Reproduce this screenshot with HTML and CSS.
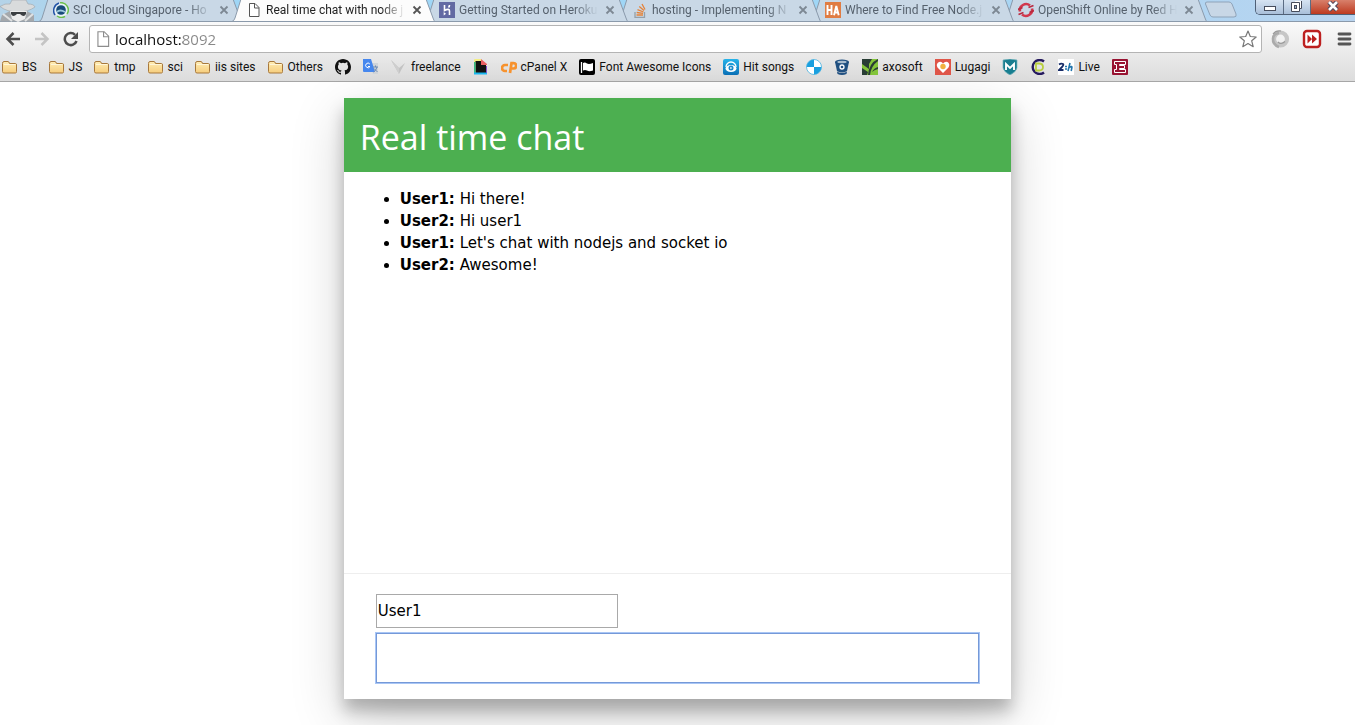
FILE: index.html
```html
<!DOCTYPE html>
<html lang="en">
<head>
<meta charset="utf-8">
<title>Real time chat with node js</title>
<link rel="stylesheet" href="styles.css">
</head>
<body>
<svg class="defs" aria-hidden="true">
  <defs>
    <linearGradient id="folder-fill" x1="0" y1="0" x2="0" y2="1"><stop offset="0" stop-color="#ffedb5"/><stop offset="1" stop-color="#f6cd7c"/></linearGradient>
    <linearGradient id="hit-fill" x1="0" y1="0" x2="0" y2="1"><stop offset="0" stop-color="#27b4ea"/><stop offset="1" stop-color="#0a6fb5"/></linearGradient>
    <symbol id="folder" viewBox="0 0 16 16"><path d="M.5 12.500V4.500Q.5 2.500 2 2.500H6Q7 2.500 7.500 4.500H13.500Q14.500 4.500 14.500 6V12.500Q14.500 14 13.500 14H2Q.5 14 .5 12.500Z" fill="url(#folder-fill)" stroke="#a8793c"/><path d="M2 5.500H13.500" stroke="#fff6d8"/></symbol>
    <symbol id="page" viewBox="0 0 16 16"><path d="M3.500 1.500H9L13 5.500V14.500H3.500Z" fill="#fff" stroke="currentColor"/><path d="M8.500 1.500V6H13" fill="none" stroke="currentColor"/></symbol>
    <symbol id="cross" viewBox="0 0 10 10"><path d="M1.500 1.500 8.500 8.500M8.500 1.500 1.500 8.500" stroke="currentColor" stroke-width="1.800"/></symbol>
    <symbol id="tab" viewBox="0 0 203 22" preserveAspectRatio="none"><path d="M0 21.500Q2 21 3 18L9-1H194L201 18Q202 21 203 21.500Z" fill="currentColor" stroke="#8b9aab"/></symbol>
  </defs>
</svg>

<header class="browser">
  <div class="tabstrip">
    <svg class="spy" viewBox="0 0 36 22" aria-hidden="true"><path d="M0 21.500 2 15 10 11H27L34 15V21.500Z" fill="#a4a8ac"/><path d="M0 6.500Q5 3 10 4L12 0H26L28 4Q34 4 35 7 28 12 18 12 7 12 0 6.500Z" fill="#d9dbdc" stroke="#9ea3a8" stroke-width=".6"/><path d="M10 11H27L25 19 18 22 12 19Z" fill="#ececec"/><path d="M11 12H26V14Q24 18 20 14H17Q13 18 11 14Z" fill="#3c3f42"/><path d="M3 14 12 21M33 14 25 21" stroke="#dfe1e2" stroke-width="2"/></svg>
    <nav class="tabs" aria-label="Tabs">
      <div class="tab tab-1">
        <svg class="tab-shape" preserveAspectRatio="none"><use href="#tab"/></svg>
        <svg class="icon" viewBox="0 0 16 16"><circle cx="8" cy="8" r="7" fill="#e9f2f6"/><path d="M2 13A8 8 0 0 1 6 1" fill="none" stroke="#2454a8" stroke-width="1.500"/><path d="M7 .8A7.200 7.200 0 0 1 14 12M12 14.300A7.200 7.200 0 0 1 4 14" fill="none" stroke="#6cc04c" stroke-width="1.500"/><circle cx="8" cy="8" r="4.800" fill="#174a7a"/><path d="M4 10Q7 7 12 10" fill="none" stroke="#9cc8df" stroke-width="1.800"/></svg>
        <a class="tab-title" href="#">SCI Cloud Singapore - Ho</a>
        <button class="tab-close" aria-label="Close tab"><svg viewBox="0 0 10 10"><use href="#cross"/></svg></button>
      </div>
      <div class="tab tab-active">
        <svg class="tab-shape" preserveAspectRatio="none"><use href="#tab"/></svg>
        <svg class="icon" viewBox="0 0 16 16"><use href="#page"/></svg>
        <a class="tab-title" href="#">Real time chat with node j</a>
        <button class="tab-close" aria-label="Close tab"><svg viewBox="0 0 10 10"><use href="#cross"/></svg></button>
      </div>
      <div class="tab tab-3">
        <svg class="tab-shape" preserveAspectRatio="none"><use href="#tab"/></svg>
        <svg class="icon" viewBox="0 0 16 16"><rect width="16" height="16" fill="#626aa3"/><path d="M5.500 3V8.500Q10.500 6 10.500 9V13M10.500 3Q10.500 4.500 9.500 5.500" fill="none" stroke="#fff" stroke-width="1.600"/><path d="M4.700 10 7 11.700 4.700 13.500Z" fill="#fff"/></svg>
        <a class="tab-title" href="#">Getting Started on Heroku</a>
        <button class="tab-close" aria-label="Close tab"><svg viewBox="0 0 10 10"><use href="#cross"/></svg></button>
      </div>
      <div class="tab tab-4">
        <svg class="tab-shape" preserveAspectRatio="none"><use href="#tab"/></svg>
        <svg class="icon" viewBox="0 0 16 16"><path d="M3 10V15.300H12.500V10" fill="none" stroke="#96a0a8" stroke-width="1.300"/><path d="M4.500 13H11M4.700 10.500 11 11.300M5.500 7.700 11.500 10M7.300 4.600 12 8.500M10 2 13 7.500" stroke="#e58238" stroke-width="1.300"/></svg>
        <a class="tab-title" href="#">hosting - Implementing N</a>
        <button class="tab-close" aria-label="Close tab"><svg viewBox="0 0 10 10"><use href="#cross"/></svg></button>
      </div>
      <div class="tab tab-5">
        <svg class="tab-shape" preserveAspectRatio="none"><use href="#tab"/></svg>
        <svg class="icon" viewBox="0 0 16 16"><rect width="16" height="16" fill="#e07c43"/><path d="M2.500 3V13M6.500 3V13M2.500 8H6.500M9 13.300 11.300 4 13.700 13.300M10 10.500H13" fill="none" stroke="#fff" stroke-width="1.900"/></svg>
        <a class="tab-title" href="#">Where to Find Free Node.j</a>
        <button class="tab-close" aria-label="Close tab"><svg viewBox="0 0 10 10"><use href="#cross"/></svg></button>
      </div>
      <div class="tab tab-6">
        <svg class="tab-shape" preserveAspectRatio="none"><use href="#tab"/></svg>
        <svg class="icon" viewBox="0 0 16 16"><path d="M2 9.500A6.200 6.200 0 0 1 12 3.500M14 6.500A6.200 6.200 0 0 1 4 12.500" fill="none" stroke="#d1384d" stroke-width="2.600"/><path d="M10.500 5.500 15.500 3.500M.5 12.500 5.500 10.500M0 7.500 4.500 5.500M11.500 10.500 16 8.500" stroke="#b92a40" stroke-width="1.800"/></svg>
        <a class="tab-title" href="#">OpenShift Online by Red H</a>
        <button class="tab-close" aria-label="Close tab"><svg viewBox="0 0 10 10"><use href="#cross"/></svg></button>
      </div>
    </nav>
    <button class="new-tab" aria-label="New tab"><svg viewBox="0 0 34 17"><path d="M3 1H25Q27 1 28 3L32 13Q33 16 30 16H9Q7 16 6 14L1.500 3Q1 1 3 1Z" fill="#c8d7e6" stroke="#8fa3b8"/></svg></button>
    <div class="window-controls">
      <button class="win win-min" aria-label="Minimize"><svg viewBox="0 0 16 12"><rect x="2.500" y="5.500" width="11" height="4" fill="#fff" stroke="#474d5c"/></svg></button>
      <button class="win win-max" aria-label="Restore"><svg viewBox="0 0 16 12"><path d="M5.500-.5H12.500V7.500H10" fill="#fff" stroke="#474d5c"/><path d="M2.500 1.500H10.500V10.500H2.500Z" fill="#fff" stroke="#474d5c"/><rect x="5.500" y="4.500" width="2" height="3" fill="#9bb0cb" stroke="#474d5c"/></svg></button>
      <button class="win win-close" aria-label="Close"><svg viewBox="0 0 16 12"><path d="M4 1 12 9M12 1 4 9" stroke="#51465a" stroke-width="4.600"/><path d="M4 1 12 9M12 1 4 9" stroke="#fff" stroke-width="2.600"/></svg></button>
    </div>
  </div>

  <div class="toolbar">
    <button class="tool" aria-label="Back"><svg viewBox="0 0 16 16"><path d="M15 8H3M8.500 2 2.500 8 8.500 14" fill="none" stroke="#4d4d4d" stroke-width="2.500"/></svg></button>
    <button class="tool" aria-label="Forward"><svg viewBox="0 0 16 16"><path d="M1 8H13M7.500 2 13.500 8 7.500 14" fill="none" stroke="#c4c4c4" stroke-width="2.500"/></svg></button>
    <button class="tool" aria-label="Reload"><svg viewBox="0 0 16 16"><path d="M13.500 10A6 6 0 1 1 12 3.800" fill="none" stroke="#4d4d4d" stroke-width="2.500"/><path d="M15 1V8H8Z" fill="#4d4d4d"/></svg></button>
    <div class="omnibox">
      <svg class="omnibox-page" viewBox="0 0 16 16"><use href="#page"/></svg>
      <input class="address" type="text" value="localhost:8092" aria-label="Address">
      <button class="star" aria-label="Bookmark this page"><svg viewBox="0 0 18 18"><path d="M9 1 11.300 6.500 17.200 7 12.700 10.800 14.200 16.700 9 13.500 3.800 16.700 5.300 10.800.8 7 6.700 6.500Z" fill="#fff" stroke="#777" stroke-width="1.200" stroke-linejoin="round"/></svg></button>
    </div>
    <div class="extensions">
      <button class="ext" aria-label="JSON viewer"><svg viewBox="0 0 20 20"><circle cx="10.500" cy="10" r="6.500" fill="none" stroke="#c6c6c6" stroke-width="4.200"/><path d="M9 18Q2.500 15.500 3 9.500 3.500 4.500 9 4" fill="none" stroke="#ababab" stroke-width="2.600"/><path d="M3 5Q6 1 11 2M8 13Q11 16 15 12.500" fill="none" stroke="#999" stroke-width="1.200"/></svg></button>
      <button class="ext" aria-label="Fast forward"><svg viewBox="0 0 20 20"><rect x="2" y="2" width="16" height="16" rx="3" fill="#fff" stroke="#bd2020" stroke-width="2.400"/><path d="M5.500 5.500 10 10 5.500 14.500ZM10 5.500 15 10 10 14.500Z" fill="#bd2020"/></svg></button>
      <button class="ext" aria-label="Menu"><svg viewBox="0 0 20 20"><path d="M5 5H16M5 10H16M5 15H16" stroke="#555" stroke-width="2.800" stroke-linecap="round"/></svg></button>
    </div>
  </div>

  <nav class="bookmarks" aria-label="Bookmarks">
    <a class="bookmark" href="#"><svg class="icon" viewBox="0 0 16 16"><use href="#folder"/></svg>BS</a>
    <a class="bookmark" href="#"><svg class="icon" viewBox="0 0 16 16"><use href="#folder"/></svg>JS</a>
    <a class="bookmark" href="#"><svg class="icon" viewBox="0 0 16 16"><use href="#folder"/></svg>tmp</a>
    <a class="bookmark" href="#"><svg class="icon" viewBox="0 0 16 16"><use href="#folder"/></svg>sci</a>
    <a class="bookmark" href="#"><svg class="icon" viewBox="0 0 16 16"><use href="#folder"/></svg>iis sites</a>
    <a class="bookmark" href="#"><svg class="icon" viewBox="0 0 16 16"><use href="#folder"/></svg>Others</a>
    <a class="bookmark" href="#" aria-label="GitHub"><svg class="icon" viewBox="0 0 16 16"><path fill="#111" d="M8 0C3.580 0 0 3.580 0 8c0 3.540 2.290 6.530 5.470 7.590.4.070.55-.17.55-.38 0-.19-.01-.82-.01-1.490-2.010.37-2.530-.49-2.690-.94-.09-.23-.48-.94-.82-1.130-.28-.15-.68-.52-.01-.53.63-.01 1.080.58 1.230.82.72 1.210 1.870.87 2.330.66.070-.52.28-.87.51-1.070-1.780-.2-3.640-.89-3.640-3.950 0-.87.31-1.590.82-2.150-.08-.2-.36-1.020.08-2.120 0 0 .67-.21 2.200.82a7.600 7.600 0 0 1 4 0c1.530-1.040 2.200-.82 2.200-.82.44 1.100.16 1.920.08 2.120.51.56.82 1.270.82 2.150 0 3.070-1.870 3.750-3.650 3.950.29.25.54.73.54 1.480 0 1.070-.01 1.930-.01 2.200 0 .21.150.46.55.38A8 8 0 0 0 16 8c0-4.420-3.580-8-8-8z"/></svg></a>
    <a class="bookmark" href="#" aria-label="Translate"><svg class="icon" viewBox="0 0 16 16"><path d="M7 4H15V15H10Z" fill="#d0d4d8"/><path d="M0 0H8L12 13H1Q0 13 0 12Z" fill="#4687ee"/><path d="M6.800 5A2.300 2.300 0 1 0 7 7.500H5" fill="none" stroke="#fff"/><path d="M10 8H15M12.500 6.500V8M14 8Q13 12 10.500 13M11 9.500 14.500 13" fill="none" stroke="#6c8bb4"/></svg></a>
    <a class="bookmark" href="#"><svg class="icon" viewBox="0 0 16 16"><path d="M0 1 8 9 14 4 8 15Z" fill="#c3c3c3"/><path d="M0 1 8 9V15Z" fill="#cecece"/></svg>freelance</a>
    <a class="bookmark" href="#" aria-label="Giphy"><svg class="icon" viewBox="0 0 16 16"><path d="M2 2H9V5H13V14H2Z" fill="#111"/><path d="M1 1V14H2.500V2H8V0H1.500Z" fill="#f4ee83"/><path d="M1 3H2.600V14H1Z" fill="#35b984"/><path d="M1 13.500H14V15.500H1Z" fill="#18b7f1"/><path d="M13 7H14V14H13Z" fill="#8052cf"/><path d="M8 0 14 5V6H8Z" fill="#e85e62"/></svg></a>
    <a class="bookmark" href="#"><svg class="icon" viewBox="0 0 16 16"><path d="M7 6H4A2.900 2.900 0 0 0 4 12H6M9 14 10.500 4.200H12.500A2.500 2.500 0 0 1 12.500 9.500H11" fill="none" stroke="#f7922d" stroke-width="2.700"/></svg>cPanel X</a>
    <a class="bookmark" href="#"><svg class="icon" viewBox="0 0 16 16"><rect width="16" height="16" rx="2" fill="#000"/><path d="M2.500 3V14" stroke="#fff" stroke-width="1.300"/><path d="M4 4Q6 3 8 4.500 10 5.500 14 4V11.500Q10 13 8 11.500 6 10.500 4 11.500Z" fill="#fff"/></svg>Font Awesome Icons</a>
    <a class="bookmark" href="#"><svg class="icon" viewBox="0 0 16 16"><rect width="16" height="16" rx="2" fill="url(#hit-fill)"/><path d="M3 8A5 5 0 0 1 13 8" fill="none" stroke="#fff" stroke-width="1.300"/><ellipse cx="8" cy="9.500" rx="5.500" ry="3.500" fill="#fff"/><circle cx="8" cy="9" r="2.500" fill="#1789ca"/><path d="M7.300 7.800 9.300 9 7.300 10.200Z" fill="#fff"/></svg>Hit songs</a>
    <a class="bookmark" href="#" aria-label="Delicious"><svg class="icon" viewBox="0 0 16 16"><circle cx="8" cy="8" r="7.500" fill="#fff"/><path d="M8 8V.5A7.500 7.500 0 0 0 .5 8ZM8 8V15.500A7.500 7.500 0 0 0 15.500 8Z" fill="#199fdf"/><circle cx="8" cy="8" r="7.500" fill="none" stroke="#48b1df" stroke-width=".8"/></svg></a>
    <a class="bookmark" href="#" aria-label="Bitbucket"><svg class="icon" viewBox="0 0 16 16"><path d="M1 3 3 12Q8 15 13 12L15 3Z" fill="#205081"/><ellipse cx="8" cy="3" rx="7" ry="2.500" fill="#205081"/><ellipse cx="8" cy="3" rx="4.700" ry="1.200" fill="#a9bdcf"/><circle cx="8" cy="8" r="2" fill="#205081" stroke="#fff" stroke-width="1.300"/><path d="M3 12.500Q8 15.500 13 12.500L12.500 15Q8 17 3.500 15Z" fill="#205081"/></svg></a>
    <a class="bookmark" href="#"><svg class="icon" viewBox="0 0 16 16"><rect width="16" height="16" fill="#83c53a"/><path d="M0 0H10L7 5 7 10 0 5ZM0 9 6 13 5 16H0ZM6 16Q7 4 16 0V2Q9 7 8 16ZM10 13Q12 9 16 8V10Q12 11 10 13Z" fill="#293d35"/></svg>axosoft</a>
    <a class="bookmark" href="#"><svg class="icon" viewBox="0 0 16 16"><rect width="16" height="16" fill="#df5548"/><path d="M8 14 2.500 8.500Q.5 5 4 3 6.500 2 8 4.500 10 2 12.500 3 15.500 5 13.500 8.500Z" fill="#fff"/><circle cx="8" cy="7.500" r="2.700" fill="#f2b23f"/></svg>Lugagi</a>
    <a class="bookmark" href="#" aria-label="M"><svg class="icon" viewBox="0 0 16 16"><path d="M1 1 8 0 15 1V9Q14 13 8 16 2 13 1 9Z" fill="#197e90" stroke="#77b4bd" stroke-width=".7"/><path d="M4 11V5L8 9 12 5V11" fill="none" stroke="#fff" stroke-width="1.900"/></svg></a>
    <a class="bookmark" href="#" aria-label="CD"><svg class="icon" viewBox="0 0 16 16"><path d="M14 2.500A7 7 0 1 0 14 13.500" fill="none" stroke="#25195e" stroke-width="2.400"/><path d="M6 4.500H9Q13 4.500 13 8T9 11.500H6Z" fill="none" stroke="#b9ce3f" stroke-width="1.800"/></svg></a>
    <a class="bookmark" href="#"><svg class="icon" viewBox="0 0 16 16"><rect width="16" height="16" fill="#fff"/><path d="M1 5.500Q3 4 5 5 6 6 4 8L1 11H5.500" fill="none" stroke="#172c69" stroke-width="1.800"/><path d="M7 7.500H9M7 10H9M12 4 10 12M11 8.500Q14.500 6.500 13.800 9L13.200 12" fill="none" stroke="#2376ad" stroke-width="1.600"/></svg>Live</a>
    <a class="bookmark" href="#" aria-label="E"><svg class="icon" viewBox="0 0 16 16"><rect width="16" height="16" rx="1" fill="#981332"/><path d="M2.500 2.500H13.500V5.500H7.500V6.500H12.500V9.500H7.500V10.500H13.500V13.500H2.500V10.500H4.500V5.500H2.500Z" fill="none" stroke="#fff"/></svg></a>
  </nav>
</header>

<main class="chat">
  <div class="chat-header"><h1 class="chat-title">Real time chat</h1></div>
  <section class="messages" aria-label="Messages">
    <ul class="message-list">
      <li><strong>User1:</strong> Hi there!</li>
      <li><strong>User2:</strong> Hi user1</li>
      <li><strong>User1:</strong> Let's chat with nodejs and socket io</li>
      <li><strong>User2:</strong> Awesome!</li>
    </ul>
  </section>
  <form class="composer">
    <input class="field field-name" type="text" value="User1" aria-label="Name">
    <input class="field field-message" type="text" aria-label="Message">
  </form>
</main>
</body>
</html>
```
FILE: styles.css
```css
* { box-sizing: border-box; }

body {
  margin: 0;
  background: #fff;
  color: #000;
  font-family: "DejaVu Sans", Verdana, sans-serif;
  font-size: 15px;
}

button {
  display: flex;
  align-items: center;
  justify-content: center;
  margin: 0;
  padding: 0;
  border: 0;
  background: none;
}

svg { display: block; flex: none; }
a { color: inherit; text-decoration: none; }

.defs { position: absolute; width: 0; height: 0; }
.icon { width: 16px; height: 16px; }

/* Browser frame */
.browser {
  font-family: Roboto, "Open Sans", sans-serif;
  font-size: 12px;
  background: linear-gradient(#fafafa 22px, #dcdcdc);
  border-bottom: 1px solid #a6a6a6;
}

.tabstrip {
  display: flex;
  height: 22px;
  overflow: hidden;
  background: linear-gradient(90deg, #b5d3e8, #9fd6f6 10%, #9fd6f6 60%, #b9d4ef);
  box-shadow: inset 0 -1px #8b9aab;
}

.spy { width: 36px; height: 22px; margin-right: 7px; }

.tabs { display: flex; flex: 0 1 1158px; min-width: 0; }

.tab {
  position: relative;
  display: flex;
  flex: 1 1 0;
  min-width: 0;
  align-items: center;
  gap: 4px;
  height: 22px;
  padding: 0 7px 2px 10px;
  color: #c9d8e6;
}

.tab-1 { z-index: 6; }
.tab-3 { z-index: 5; }
.tab-4 { z-index: 4; }
.tab-5 { z-index: 3; }
.tab-6 { z-index: 2; }
.tab-active { z-index: 7; color: #fcfcfc; }

.tab-shape {
  position: absolute;
  z-index: -1;
  top: 0;
  left: -4px;
  width: calc(100% + 10px);
  height: 22px;
}

.tab .icon { color: #555; }

.tab-title {
  flex: 1;
  min-width: 0;
  overflow: hidden;
  white-space: nowrap;
  line-height: 18px;
  color: #56616d;
  -webkit-mask-image: linear-gradient(90deg, #000 calc(100% - 24px), transparent);
  mask-image: linear-gradient(90deg, #000 calc(100% - 24px), transparent);
}

.tab-active .tab-title { color: #222; }
.tab-close { margin-left: 3px; color: #7d8893; }
.tab-close svg { width: 10px; height: 10px; }
.tab-active .tab-close { color: #555; }

.new-tab { align-self: flex-start; margin: 1px 0 0 3px; }
.new-tab svg { width: 34px; height: 17px; }

.window-controls {
  display: flex;
  height: 15px;
  margin-left: auto;
  border: 1px solid #4f6076;
  border-width: 0 0 1px 1px;
  border-radius: 0 0 0 5px;
  overflow: hidden;
}

.win {
  width: 28px;
  background: linear-gradient(#d7e4f2, #a9bfd9);
  border-right: 1px solid #5b6c83;
}

.win svg { width: 16px; height: 12px; }
.win-max { width: 27px; }
.win-close { width: 44px; border-right: 0; background: linear-gradient(#d8806b, #bd3a20); }

.toolbar {
  display: flex;
  align-items: center;
  height: 32px;
  padding: 3px 0 1px 5px;
}

.tool { margin-right: 13px; }
.tool svg { width: 16px; height: 16px; }

.omnibox {
  display: flex;
  flex: 1;
  align-items: center;
  height: 28px;
  margin-left: -3px;
  padding: 0 4px;
  background: #fff;
  border: 1px solid #b4b4b4;
  border-radius: 3px;
}

.omnibox-page { width: 18px; height: 18px; color: #8d8d8d; }

.address {
  flex: 1;
  min-width: 0;
  height: 24px;
  margin-left: 3px;
  padding: 0;
  border: 0;
  outline: 0;
  font: 15px "Open Sans", "Noto Sans", sans-serif;
  color: transparent;
  background: linear-gradient(90deg, #111 68px, #888 68px);
  -webkit-background-clip: text;
  background-clip: text;
}

.star svg { width: 18px; height: 18px; }

.extensions { display: flex; gap: 12px; padding: 0 1px 0 8px; }
.ext svg { width: 20px; height: 20px; }

.bookmarks {
  display: flex;
  gap: 12px;
  height: 27px;
  padding: 0 2px 2px;
  overflow: hidden;
}

.bookmark {
  display: flex;
  align-items: center;
  gap: 4px;
  white-space: nowrap;
  color: #111;
}

/* Chat card */
.chat {
  width: calc(50% - 10px);
  margin: 16px auto 26px;
  background: #fff;
  box-shadow: 0 12px 15px 0 rgba(0, 0, 0, 0.24), 0 17px 50px 0 rgba(0, 0, 0, 0.19);
}

.chat-header { padding: 12px 16px 8px; background: #4caf50; color: #fff; }

.chat-title {
  margin: 0;
  font: 34px/54px "Open Sans", "Noto Sans", sans-serif;
}

.messages { min-height: 401px; padding: 16px; }
.message-list { margin: 0; padding-left: 40px; line-height: 22px; }

.composer {
  display: flex;
  flex-direction: column;
  gap: 5px;
  padding: 20px 32px 16px;
  border-top: 1px solid #eee;
}

.field {
  padding: 1px;
  border: 1px solid #a9a9a9;
  font: inherit;
  color: inherit;
}

.field-name { width: 242px; height: 34px; }

.field-message {
  width: 100%;
  height: 50px;
  border-color: #7599d8;
  outline: 1px solid #a9c6f5;
}
```
